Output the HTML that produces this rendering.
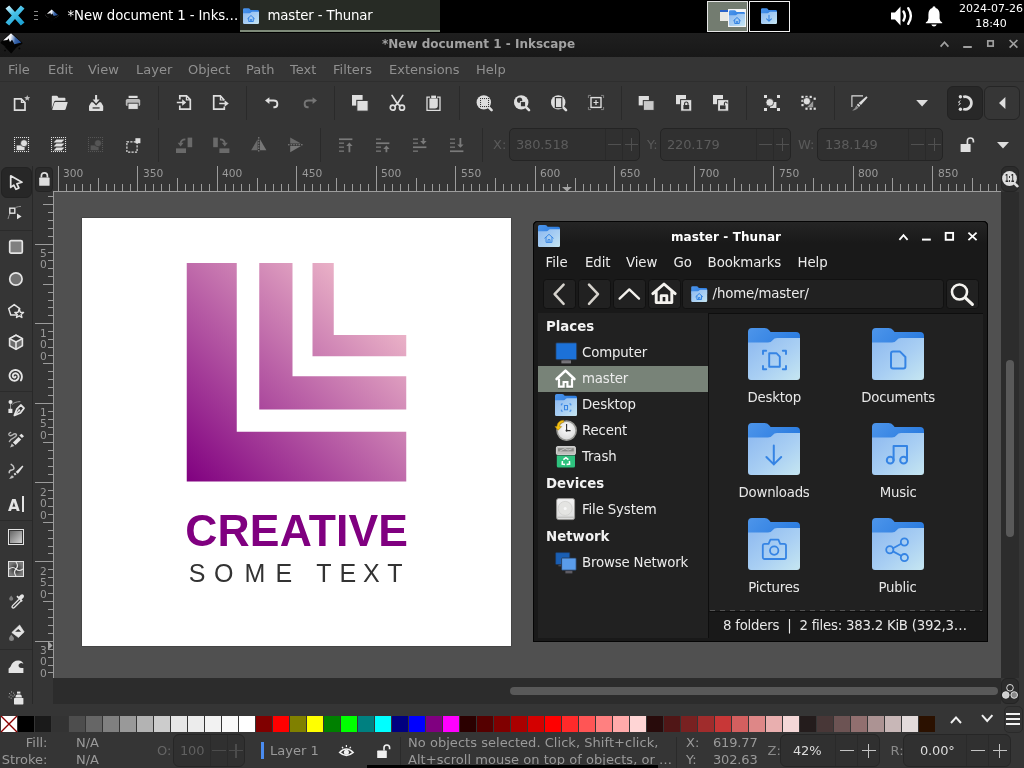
<!DOCTYPE html>
<html><head><meta charset="utf-8"><title>Inkscape</title>
<style>
html,body{margin:0;padding:0;}
body{width:1024px;height:768px;overflow:hidden;position:relative;will-change:transform;background:#353535;font-family:"DejaVu Sans","Liberation Sans",sans-serif;font-size:13px;color:#9b9b9b;}
.a{position:absolute;}
.t{position:absolute;white-space:nowrap;line-height:16px;}
svg{position:absolute;overflow:visible;}
#panel{left:0;top:0;width:1024px;height:33px;background:#000;}
#ititle{left:0;top:33px;width:1024px;height:24px;background:linear-gradient(#1f1f1f,#181818);}
#imenu{left:0;top:57px;width:1024px;height:24px;background:#353535;border-bottom:1px solid #2e2e2e;}
#imenu .t{top:5px;font-size:13px;color:#909090;}
#tb1{left:0;top:82px;width:1024px;height:42px;background:#353535;}
#tb2{left:0;top:124px;width:1024px;height:42px;background:#353535;}
.sep{position:absolute;width:1px;background:#2a2a2a;}
#canvas{left:54px;top:192px;width:947px;height:484px;background:#505050;}
#page{left:82px;top:218px;width:429px;height:428px;background:#fff;}

.rl{position:absolute;font-size:10.67px;line-height:12px;color:#9a9a9a;white-space:nowrap;}

#th{left:533px;top:221px;width:455px;height:421px;background:#191919;border-radius:5px 5px 0 0;box-shadow:inset 0 0 0 1px #050505;}
.tt{position:absolute;white-space:nowrap;line-height:16px;color:#ececec;}
</style></head><body>
<svg width="0" height="0" style="left:0;top:0"><defs>
 <linearGradient id="ffront" x1="0" y1="0" x2="1" y2="1"><stop offset="0" stop-color="#8cc0f2"/><stop offset="1" stop-color="#c4e0f3"/></linearGradient>
 <linearGradient id="inkg" gradientUnits="userSpaceOnUse" x1="4" y1="0" x2="21" y2="4"><stop offset="0" stop-color="#ffffff"/><stop offset="0.42" stop-color="#f2f4f8"/><stop offset="0.72" stop-color="#3c68ac"/><stop offset="1" stop-color="#24509a"/></linearGradient>
 <g id="inklogo">
  <path d="M11 -0.4 L22.2 9.4 Q23 10.4 22 11 L13 16 Q11 17 9 16 L1 10.6 Q0 10 0.8 9 Z" fill="#030303"/>
  <path d="M11 0.2 L21.4 9.4 L14.4 11.2 L12.1 6.8 L10 9 L8.5 5.2 L7.4 7 L3.1 7.4 Z" fill="url(#inkg)"/>
  <path d="M4.4 13.6 L17.6 13 L11.2 20.6 Z" fill="#030303"/>
  <circle cx="19.4" cy="15.4" r="0.9" fill="#030303"/><circle cx="5" cy="17.6" r="0.8" fill="#030303"/>
 </g>
</defs></svg>

<div class="a" id="panel">
 <!-- xfce logo -->
 <svg style="left:5px;top:5px" width="20" height="21" viewBox="0 0 20 21">
  <defs><linearGradient id="xg" x1="0" y1="0" x2="0.6" y2="1"><stop offset="0" stop-color="#e8f8ff"/><stop offset="0.45" stop-color="#4cc4ea"/><stop offset="1" stop-color="#1ea3d4"/></linearGradient></defs>
  <path d="M0.5 3.5 L4.2 0.5 L10 7 L15.8 0.5 L19.5 3.5 L13.2 10.5 L19.5 17.5 L15.8 20.5 L10 14 L4.2 20.5 L0.5 17.5 L6.8 10.5 Z" fill="url(#xg)"/>
 </svg>
 <div class="a" style="left:34px;top:11px;width:4px;height:1px;background:#8a8a8a"></div>
 <div class="a" style="left:34px;top:15px;width:4px;height:1px;background:#8a8a8a"></div>
 <div class="a" style="left:34px;top:19px;width:4px;height:1px;background:#8a8a8a"></div>
 <!-- small inkscape icon -->
 <svg style="left:44.6px;top:8.6px" width="14" height="13.4" viewBox="0 -0.5 23 22">
  <path d="M1.6 8.6 L0.8 10.2 L9 15.6 Q11 16.6 13 15.6 L22 10.6 L21.4 9.4" fill="none" stroke="#6a6a6a" stroke-width="1.3"/><use href="#inklogo"/>
 </svg>
 <div class="t" style="left:67.5px;top:8px;color:#fff;font-size:13.33px;letter-spacing:-0.12px">*New document 1 - Inks…</div>
 <div class="a" style="left:240px;top:0;width:200px;height:30px;background:#272b25;border-bottom:2px solid #7f8b7a"></div>
 <svg style="left:243px;top:8px" width="16" height="16" viewBox="0 0 16 16"><use href="#folds-home"/></svg>
 <div class="t" style="left:267.5px;top:8px;color:#fff;font-size:13.33px;letter-spacing:-0.15px">master - Thunar</div>
 <!-- workspace switcher -->
 <div class="a" style="left:707px;top:1px;width:39px;height:29px;border:1px solid #e6e6e6;background:#737c70"></div>
 <div class="a" style="left:720px;top:10px;width:9px;height:11px;background:#e9e9e4;border-top:2px solid #2a63c9;box-sizing:border-box"></div>
 <div class="a" style="left:728px;top:9px;width:18px;height:18px;background:#f4f4f4"></div>
 <svg style="left:729px;top:10px" width="16" height="16" viewBox="0 0 16 16"><use href="#folds-home"/></svg>
 <div class="a" style="left:749px;top:1px;width:39px;height:29px;border:1px solid #f0f0f0;background:#000"></div>
 <svg style="left:761px;top:8px" width="16" height="16" viewBox="0 0 16 16"><use href="#folds-down"/></svg>
 <!-- volume -->
 <svg style="left:890px;top:5px" width="25" height="22" viewBox="0 0 25 22">
  <path d="M1 7.5 L5 7.5 L10.5 1.5 L10.5 20.5 L5 14.5 L1 14.5 Z" fill="#fff"/>
  <path d="M13.5 6.5 Q16.3 11 13.5 15.5" fill="none" stroke="#fff" stroke-width="2.4" stroke-linecap="round"/>
  <path d="M18.2 3.2 Q23.5 11 18.2 18.8" fill="none" stroke="#fff" stroke-width="2.4" stroke-linecap="round"/>
 </svg>
 <!-- bell -->
 <svg style="left:925px;top:5px" width="18" height="22" viewBox="0 0 18 22">
  <path d="M9 1.2 Q10.6 1.2 10.6 3 Q14.6 4.2 14.6 9.5 L14.6 13.5 Q14.6 15.8 17.2 17.6 L17.2 18.2 L0.8 18.2 L0.8 17.6 Q3.4 15.8 3.4 13.5 L3.4 9.5 Q3.4 4.2 7.4 3 Q7.4 1.2 9 1.2 Z" fill="#fff"/>
  <path d="M6.3 19.6 L11.7 19.6 Q11 21.6 9 21.6 Q7 21.6 6.3 19.6 Z" fill="#fff"/>
 </svg>
 <div class="t" style="left:951px;top:2px;width:80px;text-align:center;color:#fff;font-size:11px;line-height:13px">2024-07-26</div>
 <div class="t" style="left:951px;top:17px;width:80px;text-align:center;color:#fff;font-size:11px;line-height:13px">18:40</div>
</div>

<div class="a" id="ititle">
 <svg style="left:0px;top:0px" width="24" height="24" viewBox="0 0 24 24"><use href="#inklogo"/></svg>
 <div class="t" style="left:0;width:957px;text-align:center;top:3px;font-size:12px;font-weight:bold;color:#a2a2a2">*New document 1 - Inkscape</div>
 <svg style="left:936px;top:0" width="88" height="24" viewBox="0 0 88 24" fill="none" stroke="#a0a0a0" stroke-width="1.7">
  <path d="M4.6 13.6 L8.5 9.2 L12.4 13.6"/>
  <path d="M27.2 14 L35.8 14" stroke-width="2"/>
  <rect x="51.8" y="7.9" width="5.4" height="5.2" stroke-width="1.7"/>
  <path d="M73.6 7 L81.4 14.6 M81.4 7 L73.6 14.6"/>
 </svg>
</div>
<div class="a" id="imenu"><div class="t" style="left:8px">File</div><div class="t" style="left:48px">Edit</div><div class="t" style="left:88px">View</div><div class="t" style="left:136px">Layer</div><div class="t" style="left:188px">Object</div><div class="t" style="left:246px">Path</div><div class="t" style="left:290px">Text</div><div class="t" style="left:333px">Filters</div><div class="t" style="left:389px">Extensions</div><div class="t" style="left:476px">Help</div></div>
<div class="a" style="left:0;top:82px;width:1024px;height:86px;background:#353535"></div>
<div class="sep" style="left:158px;top:86px;height:34px"></div>
<div class="sep" style="left:246px;top:86px;height:34px"></div>
<div class="sep" style="left:334px;top:86px;height:34px"></div>
<div class="sep" style="left:459px;top:86px;height:34px"></div>
<div class="sep" style="left:621px;top:86px;height:34px"></div>
<div class="sep" style="left:746px;top:86px;height:34px"></div>
<div class="sep" style="left:834px;top:86px;height:34px"></div>
<div class="sep" style="left:158px;top:128px;height:34px"></div>
<div class="sep" style="left:320px;top:128px;height:34px"></div>
<div class="sep" style="left:482px;top:128px;height:34px"></div>
<svg style="left:13px;top:95px" width="16" height="16" viewBox="0 0 16 16" ><path d="M1.6 3.9 H8.2 L12 7.6 V15.2 H1.6 Z" fill="none" stroke="#dedede" stroke-width="1.7" stroke-linejoin="miter"/><path d="M8.4 3.9 V7.4 H12" fill="none" stroke="#dedede" stroke-width="1.2"/><polygon points="14.20,0.00 15.02,2.07 17.24,2.21 15.53,3.63 16.08,5.79 14.20,4.60 12.32,5.79 12.87,3.63 11.16,2.21 13.38,2.07" fill="#bdbdbd"/></svg>
<svg style="left:51px;top:95px" width="16" height="16" viewBox="0 0 16 16" ><path d="M0.8 1.6 Q0.8 0.8 1.6 0.8 H5.6 Q6.4 0.8 6.8 1.6 L7.4 2.8 H13.6 Q14.4 2.8 14.4 3.6 V5.8 H4.4 Q3.4 5.8 3.1 6.8 L0.8 13.6 Z" fill="#dedede"/><path d="M4.6 7 H16.2 Q16.9 7 16.6 7.8 L14.6 14.2 Q14.3 15 13.4 15 H1.6 Q1 15 1.3 14.2 L3.4 7.8 Q3.7 7 4.6 7 Z" fill="#dedede"/></svg>
<svg style="left:88px;top:95px" width="16" height="16" viewBox="0 0 16 16" ><path d="M7.1 0 H9.1 V4.6 H11.6 L8.1 8.6 L4.6 4.6 H7.1 Z" fill="#dedede"/><path d="M3.2 7.2 H5 L8.1 10.6 L11.2 7.2 H13 L15.2 11 V15.2 Q15.2 16 14.4 16 H1.8 Q1 16 1 15.2 V11 Z" fill="#dedede"/><rect x="4.6" y="12.3" width="7" height="1.3" fill="#353535"/></svg>
<svg style="left:125px;top:95px" width="16" height="16" viewBox="0 0 16 16" ><rect x="3.6" y="0.8" width="9" height="2.2" fill="#dedede"/><rect x="0.8" y="4" width="14.4" height="7" rx="1.6" fill="#b8b8b8"/><rect x="3" y="8.2" width="10.2" height="6.2" fill="#dedede" stroke="#353535" stroke-width="0.9"/></svg>
<svg style="left:176px;top:95px" width="16" height="16" viewBox="0 0 16 16" ><path d="M3.8 4.6 V0.9 H10.6 L14.3 4.6 V14.1 H3.8 V10.4" fill="none" stroke="#dedede" stroke-width="1.7"/><path d="M10.4 1 V4.8 H14.2" fill="none" stroke="#dedede" stroke-width="1.2"/><path d="M0.8 6.7 H6.2 V4.3 L10.2 7.5 L6.2 10.7 V8.3 H0.8 Z" fill="#dedede"/></svg>
<svg style="left:212px;top:95px" width="16" height="16" viewBox="0 0 16 16" ><path d="M12.3 5.2 L8.4 0.9 H1.7 V14.1 H12.3 V11.6" fill="none" stroke="#dedede" stroke-width="1.7"/><path d="M8.4 1 V5 H12.2" fill="none" stroke="#dedede" stroke-width="1.2"/><path d="M7.2 7.7 H12.6 V5.3 L16.8 8.5 L12.6 11.7 V9.3 H7.2 Z" fill="#dedede"/></svg>
<svg style="left:264px;top:95px" width="16" height="16" viewBox="0 0 16 16" ><path d="M5.4 2.2 V4.6 H9.6 Q14.3 4.6 14.3 8.9 Q14.3 13.2 10.4 13.2 H9.4 V11.3 H10.2 Q12.4 11.3 12.4 8.9 Q12.4 6.6 9.6 6.6 H5.4 V9 L1 5.6 Z" fill="#dedede"/></svg>
<svg style="left:302px;top:95px" width="16" height="16" viewBox="0 0 16 16" ><g transform="translate(16,0) scale(-1,1)"><path d="M5.4 2.2 V4.6 H9.6 Q14.3 4.6 14.3 8.9 Q14.3 13.2 10.4 13.2 H9.4 V11.3 H10.2 Q12.4 11.3 12.4 8.9 Q12.4 6.6 9.6 6.6 H5.4 V9 L1 5.6 Z" fill="#757575"/></g></svg>
<svg style="left:352px;top:95px" width="16" height="16" viewBox="0 0 16 16" ><rect x="0" y="0" width="10.6" height="10.6" fill="#dedede"/><rect x="4.8" y="5.4" width="11.4" height="10.8" fill="#dedede" stroke="#353535" stroke-width="1.1"/></svg>
<svg style="left:388.6px;top:95px" width="16" height="16" viewBox="0 0 16 16" ><path d="M3 0.4 L8.4 8.8 L10.8 10.6 M13.8 0.4 L8.4 8.8 L6 10.6" stroke="#dedede" stroke-width="1.7" fill="none" stroke-linecap="round" stroke-linejoin="round"/><circle cx="3.8" cy="12.7" r="2.5" fill="none" stroke="#dedede" stroke-width="1.7"/><circle cx="13" cy="12.7" r="2.5" fill="none" stroke="#dedede" stroke-width="1.7"/></svg>
<svg style="left:425.6px;top:95px" width="16" height="16" viewBox="0 0 16 16" ><path d="M4 2.1 H1 V15.4 H14 V2.1 H11" fill="none" stroke="#dedede" stroke-width="1.3"/><rect x="5.2" y="0.6" width="4.8" height="2.6" fill="#dedede"/><path d="M3.4 3.4 H11.8 V10.4 Q11.8 13.4 8.8 13.4 H3.4 Z" fill="#dedede"/></svg>
<svg style="left:476px;top:95px" width="16" height="16" viewBox="0 0 16 16" ><g transform="translate(0.6,0)"><circle cx="7.2" cy="7.4" r="7.2" fill="#dedede"/><path d="M12 12.2 L15 15.2" stroke="#dedede" stroke-width="2.6" stroke-linecap="round"/></g><rect x="4" y="3" width="1.05" height="1.05" fill="#353535"/><rect x="4" y="11" width="1.05" height="1.05" fill="#353535"/><rect x="6" y="3" width="1.05" height="1.05" fill="#353535"/><rect x="6" y="11" width="1.05" height="1.05" fill="#353535"/><rect x="4" y="5" width="1.05" height="1.05" fill="#353535"/><rect x="12" y="5" width="1.05" height="1.05" fill="#353535"/><rect x="8" y="3" width="1.05" height="1.05" fill="#353535"/><rect x="8" y="11" width="1.05" height="1.05" fill="#353535"/><rect x="4" y="7" width="1.05" height="1.05" fill="#353535"/><rect x="12" y="7" width="1.05" height="1.05" fill="#353535"/><rect x="10" y="3" width="1.05" height="1.05" fill="#353535"/><rect x="10" y="11" width="1.05" height="1.05" fill="#353535"/><rect x="4" y="9" width="1.05" height="1.05" fill="#353535"/><rect x="12" y="9" width="1.05" height="1.05" fill="#353535"/><rect x="12" y="3" width="1.05" height="1.05" fill="#353535"/><rect x="12" y="11" width="1.05" height="1.05" fill="#353535"/></svg>
<svg style="left:513.8px;top:95px" width="16" height="16" viewBox="0 0 16 16" ><circle cx="7.2" cy="7.4" r="7.2" fill="#dedede"/><path d="M12 12.2 L15 15.2" stroke="#dedede" stroke-width="2.6" stroke-linecap="round"/><circle cx="5.6" cy="5.2" r="2.6" fill="#353535"/><rect x="6.4" y="6.6" width="5.2" height="5.2" fill="#353535" stroke="#dedede" stroke-width="0.9"/></svg>
<svg style="left:551px;top:95px" width="16" height="16" viewBox="0 0 16 16" ><circle cx="7.2" cy="7.4" r="7.2" fill="#dedede"/><path d="M12 12.2 L15 15.2" stroke="#dedede" stroke-width="2.6" stroke-linecap="round"/><rect x="4.4" y="2.6" width="6.4" height="10" fill="#dedede" stroke="#353535" stroke-width="1.2"/></svg>
<svg style="left:588.4px;top:95px" width="16" height="16" viewBox="0 0 16 16" ><rect x="3" y="2.6" width="10" height="9.8" fill="none" stroke="#dedede" stroke-width="1.4"/><path d="M8 5 V10 M5.5 7.5 H10.5" stroke="#dedede" stroke-width="1.2"/><path d="M0.4 3 V0.4 H3 M13 0.4 H15.6 V3 M15.6 12 V14.6 H13 M3 14.6 H0.4 V12" fill="none" stroke="#8a8a8a" stroke-width="0.9"/></svg>
<svg style="left:638.4px;top:95px" width="16" height="16" viewBox="0 0 16 16" ><rect x="0.7" y="1" width="10.2" height="9.4" fill="#dedede"/><rect x="5.3" y="5.6" width="10.8" height="9.8" fill="#c9c9c9" stroke="#353535" stroke-width="1"/></svg>
<svg style="left:675.8px;top:95px" width="16" height="16" viewBox="0 0 16 16" ><rect x="0" y="0" width="10" height="9.2" fill="#dedede"/><rect x="4.6" y="4.6" width="11.2" height="11.6" fill="#dedede" stroke="#353535" stroke-width="1"/><rect x="7.4" y="10" width="5.8" height="4.2" fill="#353535"/><path d="M8.6 10 V8.6 Q8.6 7 10.3 7 Q12 7 12 8.6 V10" fill="none" stroke="#353535" stroke-width="1.1"/></svg>
<svg style="left:713px;top:95px" width="16" height="16" viewBox="0 0 16 16" ><rect x="0" y="0" width="10" height="9.2" fill="#dedede"/><rect x="4.6" y="4.6" width="11.2" height="11.6" fill="#dedede" stroke="#353535" stroke-width="1"/><rect x="7" y="10.4" width="5.6" height="3.8" fill="#353535"/><path d="M11.4 10.4 V8.4 Q11.4 7 12.8 7 Q14.2 7 14.2 8.6" fill="none" stroke="#353535" stroke-width="1.1"/></svg>
<svg style="left:764px;top:95px" width="16" height="16" viewBox="0 0 16 16" ><rect x="0" y="0" width="3" height="3" fill="#dedede"/><rect x="13" y="0" width="3" height="3" fill="#dedede"/><rect x="0" y="13" width="3" height="3" fill="#dedede"/><rect x="13" y="13" width="3" height="3" fill="#dedede"/><rect x="6" y="7" width="6.4" height="6" fill="#dedede"/><circle cx="5.8" cy="7.4" r="3.9" fill="#dedede" stroke="#353535" stroke-width="0.8"/></svg>
<svg style="left:801px;top:95px" width="16" height="16" viewBox="0 0 16 16" ><rect x="0.4" y="0.8" width="2.2" height="2.2" fill="#dedede"/><rect x="4.4" y="0.8" width="2.2" height="2.2" fill="#dedede"/><rect x="8.6" y="0.8" width="2.2" height="2.2" fill="#dedede"/><rect x="0.4" y="4.8" width="2.2" height="2.2" fill="#dedede"/><rect x="0.4" y="9" width="2.2" height="2.2" fill="#dedede"/><rect x="12.6" y="2.6" width="2.2" height="2.2" fill="#dedede"/><rect x="12.6" y="12.6" width="2.2" height="2.2" fill="#dedede"/><rect x="4.4" y="12.6" width="2.2" height="2.2" fill="#dedede"/><rect x="8.6" y="12.6" width="2.2" height="2.2" fill="#dedede"/><path d="M12.2 6 V12.2 H6 Z" fill="#9a9a9a"/><circle cx="5.8" cy="6.2" r="3.7" fill="#dedede" stroke="#353535" stroke-width="0.8"/></svg>
<svg style="left:851px;top:95px" width="16" height="16" viewBox="0 0 16 16" ><path d="M0.9 12 V0.9 H12" fill="none" stroke="#dedede" stroke-width="1.1"/><path d="M15.4 1.2 L16.6 2.6 L9.9 10 L7.7 8 Z" fill="#dedede"/><path d="M7 8.6 L9.2 10.6 L8 11.9 L5.8 9.9 Z" fill="#dedede"/><path d="M5.2 10.4 L7.5 12.4 Q6 14.8 1.2 15.8 Q4.4 13.6 5.2 10.4 Z" fill="#8f8f8f"/></svg>
<svg style="left:14px;top:137px" width="16" height="16" viewBox="0 0 16 16" ><rect x="0" y="0" width="1.05" height="1.05" fill="#dedede"/><rect x="0" y="14" width="1.05" height="1.05" fill="#dedede"/><rect x="2" y="0" width="1.05" height="1.05" fill="#dedede"/><rect x="2" y="14" width="1.05" height="1.05" fill="#dedede"/><rect x="0" y="2" width="1.05" height="1.05" fill="#dedede"/><rect x="14" y="2" width="1.05" height="1.05" fill="#dedede"/><rect x="4" y="0" width="1.05" height="1.05" fill="#dedede"/><rect x="4" y="14" width="1.05" height="1.05" fill="#dedede"/><rect x="0" y="4" width="1.05" height="1.05" fill="#dedede"/><rect x="14" y="4" width="1.05" height="1.05" fill="#dedede"/><rect x="6" y="0" width="1.05" height="1.05" fill="#dedede"/><rect x="6" y="14" width="1.05" height="1.05" fill="#dedede"/><rect x="0" y="6" width="1.05" height="1.05" fill="#dedede"/><rect x="14" y="6" width="1.05" height="1.05" fill="#dedede"/><rect x="8" y="0" width="1.05" height="1.05" fill="#dedede"/><rect x="8" y="14" width="1.05" height="1.05" fill="#dedede"/><rect x="0" y="8" width="1.05" height="1.05" fill="#dedede"/><rect x="14" y="8" width="1.05" height="1.05" fill="#dedede"/><rect x="10" y="0" width="1.05" height="1.05" fill="#dedede"/><rect x="10" y="14" width="1.05" height="1.05" fill="#dedede"/><rect x="0" y="10" width="1.05" height="1.05" fill="#dedede"/><rect x="14" y="10" width="1.05" height="1.05" fill="#dedede"/><rect x="12" y="0" width="1.05" height="1.05" fill="#dedede"/><rect x="12" y="14" width="1.05" height="1.05" fill="#dedede"/><rect x="0" y="12" width="1.05" height="1.05" fill="#dedede"/><rect x="14" y="12" width="1.05" height="1.05" fill="#dedede"/><rect x="14" y="0" width="1.05" height="1.05" fill="#dedede"/><rect x="14" y="14" width="1.05" height="1.05" fill="#dedede"/><rect x="2.6" y="8.4" width="8" height="4.8" fill="#dedede"/><circle cx="10" cy="6.2" r="3.5" fill="#dedede" stroke="#353535" stroke-width="0.7"/></svg>
<svg style="left:51px;top:137px" width="16" height="16" viewBox="0 0 16 16" ><rect x="0" y="0" width="1.05" height="1.05" fill="#dedede"/><rect x="0" y="14" width="1.05" height="1.05" fill="#dedede"/><rect x="2" y="0" width="1.05" height="1.05" fill="#dedede"/><rect x="2" y="14" width="1.05" height="1.05" fill="#dedede"/><rect x="0" y="2" width="1.05" height="1.05" fill="#dedede"/><rect x="14" y="2" width="1.05" height="1.05" fill="#dedede"/><rect x="4" y="0" width="1.05" height="1.05" fill="#dedede"/><rect x="4" y="14" width="1.05" height="1.05" fill="#dedede"/><rect x="0" y="4" width="1.05" height="1.05" fill="#dedede"/><rect x="14" y="4" width="1.05" height="1.05" fill="#dedede"/><rect x="6" y="0" width="1.05" height="1.05" fill="#dedede"/><rect x="6" y="14" width="1.05" height="1.05" fill="#dedede"/><rect x="0" y="6" width="1.05" height="1.05" fill="#dedede"/><rect x="14" y="6" width="1.05" height="1.05" fill="#dedede"/><rect x="8" y="0" width="1.05" height="1.05" fill="#dedede"/><rect x="8" y="14" width="1.05" height="1.05" fill="#dedede"/><rect x="0" y="8" width="1.05" height="1.05" fill="#dedede"/><rect x="14" y="8" width="1.05" height="1.05" fill="#dedede"/><rect x="10" y="0" width="1.05" height="1.05" fill="#dedede"/><rect x="10" y="14" width="1.05" height="1.05" fill="#dedede"/><rect x="0" y="10" width="1.05" height="1.05" fill="#dedede"/><rect x="14" y="10" width="1.05" height="1.05" fill="#dedede"/><rect x="12" y="0" width="1.05" height="1.05" fill="#dedede"/><rect x="12" y="14" width="1.05" height="1.05" fill="#dedede"/><rect x="0" y="12" width="1.05" height="1.05" fill="#dedede"/><rect x="14" y="12" width="1.05" height="1.05" fill="#dedede"/><rect x="14" y="0" width="1.05" height="1.05" fill="#dedede"/><rect x="14" y="14" width="1.05" height="1.05" fill="#dedede"/><path d="M5.4 2.6 H13.4 L10.6 5.4 H2.6 Z" fill="#dedede"/><path d="M5.4 6.6 H13.4 L10.6 9.399999999999999 H2.6 Z" fill="#dedede"/><path d="M5.4 10.6 H13.4 L10.6 13.399999999999999 H2.6 Z" fill="#dedede"/></svg>
<svg style="left:88px;top:137px" width="16" height="16" viewBox="0 0 16 16" ><rect x="0" y="0" width="1.05" height="1.05" fill="#555"/><rect x="0" y="14" width="1.05" height="1.05" fill="#555"/><rect x="2" y="0" width="1.05" height="1.05" fill="#555"/><rect x="2" y="14" width="1.05" height="1.05" fill="#555"/><rect x="0" y="2" width="1.05" height="1.05" fill="#555"/><rect x="14" y="2" width="1.05" height="1.05" fill="#555"/><rect x="4" y="0" width="1.05" height="1.05" fill="#555"/><rect x="4" y="14" width="1.05" height="1.05" fill="#555"/><rect x="0" y="4" width="1.05" height="1.05" fill="#555"/><rect x="14" y="4" width="1.05" height="1.05" fill="#555"/><rect x="6" y="0" width="1.05" height="1.05" fill="#555"/><rect x="6" y="14" width="1.05" height="1.05" fill="#555"/><rect x="0" y="6" width="1.05" height="1.05" fill="#555"/><rect x="14" y="6" width="1.05" height="1.05" fill="#555"/><rect x="8" y="0" width="1.05" height="1.05" fill="#555"/><rect x="8" y="14" width="1.05" height="1.05" fill="#555"/><rect x="0" y="8" width="1.05" height="1.05" fill="#555"/><rect x="14" y="8" width="1.05" height="1.05" fill="#555"/><rect x="10" y="0" width="1.05" height="1.05" fill="#555"/><rect x="10" y="14" width="1.05" height="1.05" fill="#555"/><rect x="0" y="10" width="1.05" height="1.05" fill="#555"/><rect x="14" y="10" width="1.05" height="1.05" fill="#555"/><rect x="12" y="0" width="1.05" height="1.05" fill="#555"/><rect x="12" y="14" width="1.05" height="1.05" fill="#555"/><rect x="0" y="12" width="1.05" height="1.05" fill="#555"/><rect x="14" y="12" width="1.05" height="1.05" fill="#555"/><rect x="14" y="0" width="1.05" height="1.05" fill="#555"/><rect x="14" y="14" width="1.05" height="1.05" fill="#555"/><rect x="2.6" y="8.4" width="8" height="4.8" fill="#555"/><circle cx="10" cy="6.2" r="3.5" fill="#555" stroke="#353535" stroke-width="0.7"/></svg>
<svg style="left:125.6px;top:137px" width="16" height="16" viewBox="0 0 16 16" ><rect x="0.9" y="4.9" width="10.2" height="10.2" fill="none" stroke="#dedede" stroke-width="1.2" stroke-dasharray="2.2 1.2"/><rect x="9.4" y="1.2" width="5" height="5" fill="#dedede"/></svg>
<svg style="left:175.8px;top:137px" width="16" height="16" viewBox="0 0 16 16" ><rect x="11.6" y="0.6" width="4.6" height="9.6" fill="#6a6a6a"/><rect x="0" y="11.4" width="10" height="4.6" fill="#6a6a6a"/><path d="M9.4 2.4 Q4.6 2.4 4.6 7" fill="none" stroke="#6a6a6a" stroke-width="1.8"/><path d="M1.6 5.8 H7.6 L4.6 9.6 Z" fill="#6a6a6a"/></svg>
<svg style="left:212.8px;top:137px" width="16" height="16" viewBox="0 0 16 16" ><g transform="translate(16.4,0) scale(-1,1)"><rect x="11.6" y="0.6" width="4.6" height="9.6" fill="#6a6a6a"/><rect x="0" y="11.4" width="10" height="4.6" fill="#6a6a6a"/><path d="M9.4 2.4 Q4.6 2.4 4.6 7" fill="none" stroke="#6a6a6a" stroke-width="1.8"/><path d="M1.6 5.8 H7.6 L4.6 9.6 Z" fill="#6a6a6a"/></g></svg>
<svg style="left:251px;top:137px" width="16" height="16" viewBox="0 0 16 16" ><path d="M6.6 2.2 V13.2 H0.2 Z" fill="#6a6a6a"/><path d="M9 2.2 V13.2 H15.4 Z" fill="#777"/><path d="M7.8 0 V15.4" stroke="#8a8a8a" stroke-width="1" stroke-dasharray="1.6 1"/></svg>
<svg style="left:287.6px;top:137px" width="16" height="16" viewBox="0 0 16 16" ><path d="M2.2 0.4 V6.6 H13 Z" fill="#6a6a6a"/><path d="M2.2 15.2 V9 H13 Z" fill="#777"/><path d="M0 7.8 H15" stroke="#8a8a8a" stroke-width="1" stroke-dasharray="1.6 1"/></svg>
<svg style="left:338.8px;top:138px" width="16" height="16" viewBox="0 0 16 16" ><rect x="0" y="0.4" width="13.4" height="1.7" fill="#7a7a7a"/><rect x="0" y="4.4" width="5" height="1.6" fill="#6a6a6a"/><rect x="0" y="8.4" width="5" height="1.6" fill="#6a6a6a"/><rect x="0" y="12.4" width="5" height="1.6" fill="#6a6a6a"/><path d="M9.5 14.2 V8.0 H7.2 L10.4 4.6 L13.600000000000001 8.0 H11.3 V14.2 Z" fill="#7a7a7a"/></svg>
<svg style="left:375.8px;top:138px" width="16" height="16" viewBox="0 0 16 16" ><rect x="0" y="0.4" width="5" height="1.6" fill="#6a6a6a"/><rect x="0" y="4.4" width="13.4" height="1.7" fill="#7a7a7a"/><rect x="0" y="8.4" width="5" height="1.6" fill="#6a6a6a"/><rect x="0" y="12.4" width="5" height="1.6" fill="#6a6a6a"/><path d="M9.5 14.2 V11.0 H7.2 L10.4 7.6 L13.600000000000001 11.0 H11.3 V14.2 Z" fill="#7a7a7a"/></svg>
<svg style="left:413px;top:138px" width="16" height="16" viewBox="0 0 16 16" ><rect x="0" y="0.4" width="5" height="1.6" fill="#6a6a6a"/><rect x="0" y="4.4" width="5" height="1.6" fill="#6a6a6a"/><rect x="0" y="8.4" width="13.4" height="1.7" fill="#7a7a7a"/><rect x="0" y="12.4" width="5" height="1.6" fill="#6a6a6a"/><path d="M9.5 0 V3.0000000000000004 H7.2 L10.4 6.4 L13.600000000000001 3.0000000000000004 H11.3 V0 Z" fill="#7a7a7a"/></svg>
<svg style="left:449.8px;top:138px" width="16" height="16" viewBox="0 0 16 16" ><rect x="0" y="0.4" width="5" height="1.6" fill="#6a6a6a"/><rect x="0" y="4.4" width="5" height="1.6" fill="#6a6a6a"/><rect x="0" y="8.4" width="5" height="1.6" fill="#6a6a6a"/><rect x="0" y="12.4" width="13.4" height="1.7" fill="#7a7a7a"/><path d="M9.5 0 V6.4 H7.2 L10.4 9.8 L13.600000000000001 6.4 H11.3 V0 Z" fill="#7a7a7a"/></svg>
<svg style="left:916px;top:99.6px" width="12" height="7" viewBox="0 0 12 7" ><path d="M0.2 0 H12 L6.1 6.4 Z" fill="#dedede"/></svg>
<div class="a" style="left:947px;top:86px;width:34px;height:32px;border:1px solid #222;border-radius:6px;background:#282828"></div>
<svg style="left:957.4px;top:95px" width="16" height="16" viewBox="0 0 16 16" ><path d="M6.2 2 A6.3 6.3 0 1 1 6.2 14" fill="none" stroke="#dedede" stroke-width="2.7"/><circle cx="3.4" cy="1.8" r="1.7" fill="#dedede"/><circle cx="3.4" cy="14.2" r="1.7" fill="#dedede"/><path d="M3.4 5.6 L1.4 7.2 L3.4 8.6 L1.4 10.2" fill="none" stroke="#dedede" stroke-width="1"/></svg>
<div class="a" style="left:984px;top:86px;width:34px;height:32px;border:1px solid #252525;border-radius:6px;background:#363636"></div>
<svg style="left:999px;top:97.2px" width="7" height="12" viewBox="0 0 7 12" ><path d="M6.4 0 V12 L0 6 Z" fill="#dedede"/></svg>
<div class="t" style="left:493px;top:137px;color:#5a5a5a">X:</div><div class="a" style="left:509px;top:128px;width:129px;height:31px;border:1px solid #242424;border-radius:5px;background:#303030"></div><div class="t" style="left:516px;top:137px;color:#5c5c5c;letter-spacing:-0.15px">380.518</div><div class="a" style="left:605px;top:129px;width:1px;height:31px;background:#2a2a2a"></div><div class="a" style="left:622px;top:129px;width:1px;height:31px;background:#2a2a2a"></div><div class="a" style="left:607.5px;top:144px;width:13px;height:1px;background:#505050"></div><div class="a" style="left:624.5px;top:144px;width:13px;height:1px;background:#505050"></div><div class="a" style="left:630.5px;top:138px;width:1px;height:13px;background:#505050"></div>
<div class="t" style="left:647px;top:137px;color:#5a5a5a">Y:</div><div class="a" style="left:660px;top:128px;width:129px;height:31px;border:1px solid #242424;border-radius:5px;background:#303030"></div><div class="t" style="left:667px;top:137px;color:#5c5c5c;letter-spacing:-0.15px">220.179</div><div class="a" style="left:756px;top:129px;width:1px;height:31px;background:#2a2a2a"></div><div class="a" style="left:773px;top:129px;width:1px;height:31px;background:#2a2a2a"></div><div class="a" style="left:758.5px;top:144px;width:13px;height:1px;background:#505050"></div><div class="a" style="left:775.5px;top:144px;width:13px;height:1px;background:#505050"></div><div class="a" style="left:781.5px;top:138px;width:1px;height:13px;background:#505050"></div>
<div class="t" style="left:798px;top:137px;color:#5a5a5a">W:</div><div class="a" style="left:817px;top:128px;width:124px;height:31px;border:1px solid #242424;border-radius:5px;background:#303030"></div><div class="t" style="left:825px;top:137px;color:#5c5c5c;letter-spacing:-0.15px">138.149</div><div class="a" style="left:908px;top:129px;width:1px;height:31px;background:#2a2a2a"></div><div class="a" style="left:925px;top:129px;width:1px;height:31px;background:#2a2a2a"></div><div class="a" style="left:910.5px;top:144px;width:13px;height:1px;background:#505050"></div><div class="a" style="left:927.5px;top:144px;width:13px;height:1px;background:#505050"></div><div class="a" style="left:933.5px;top:138px;width:1px;height:13px;background:#505050"></div>
<svg style="left:959.6px;top:137px" width="16" height="16" viewBox="0 0 16 16" ><rect x="0.6" y="7" width="10" height="8" rx="0.6" fill="#dedede"/><path d="M7.4 7 V4 Q7.4 1 10.4 1 Q13.4 1 13.4 4 V5.4" fill="none" stroke="#dedede" stroke-width="1.7"/></svg>
<svg style="left:997px;top:141.8px" width="12" height="7" viewBox="0 0 12 7" ><path d="M0 0 H12 L6 6.4 Z" fill="#dedede"/></svg>
<div class="a" style="left:33px;top:166px;width:991px;height:26px;background:#353535"></div>
<div class="a" style="left:33px;top:192px;width:21px;height:512px;background:#353535"></div>
<div class="a" style="left:54px;top:192px;width:947px;height:486px;background:#505050"></div>
<div class="a" style="left:82px;top:218px;width:429px;height:428px;background:#fff;box-shadow:0 0 0 0.5px #3a3a3a"></div>
<svg style="left:0;top:0" width="1024" height="700"><defs><linearGradient id="lg" gradientUnits="userSpaceOnUse" x1="187" y1="481.5" x2="406.25" y2="263"><stop offset="0" stop-color="#800080"/><stop offset="1" stop-color="#ffd5d5"/></linearGradient></defs><path d="M186.75 263 H236.75 V431.75 H406.25 V481.4 H186.75 Z M259.25 263 H292.5 V376.25 H406.25 V409.5 H259.25 Z M312.5 263 H333.75 V335 H406.25 V356.25 H312.5 Z" fill="url(#lg)"/><text x="185.3" y="545.9" font-family="Liberation Sans, sans-serif" font-weight="bold" font-size="44.5" letter-spacing="0.15" fill="#800080">CREATIVE</text><text x="197.1 223.75 255 283.75 304 324 347.9 371.25 395" y="581.8" text-anchor="middle" font-family="Liberation Sans, sans-serif" font-size="25" fill="#333333">SOME TEXT</text></svg>
<div class="a" style="left:53px;top:191px;width:948px;height:1px;background:#9c9c9c"></div>
<div class="a" style="left:53px;top:191px;width:1px;height:487px;background:#9c9c9c"></div>
<svg style="left:0;top:0" width="1024" height="200"><path d="M58.5 166V191M66.5 184V191M74.5 184V191M82.5 184V191M90.5 184V191M98.5 178V191M106.5 184V191M114.5 184V191M122.5 184V191M130.5 184V191M137.5 166V191M145.5 184V191M153.5 184V191M161.5 184V191M169.5 184V191M177.5 178V191M185.5 184V191M193.5 184V191M201.5 184V191M209.5 184V191M217.5 166V191M225.5 184V191M233.5 184V191M241.5 184V191M249.5 184V191M257.5 178V191M265.5 184V191M273.5 184V191M281.5 184V191M288.5 184V191M296.5 166V191M304.5 184V191M312.5 184V191M320.5 184V191M328.5 184V191M336.5 178V191M344.5 184V191M352.5 184V191M360.5 184V191M368.5 184V191M376.5 166V191M384.5 184V191M392.5 184V191M400.5 184V191M408.5 184V191M416.5 178V191M424.5 184V191M432.5 184V191M439.5 184V191M447.5 184V191M455.5 166V191M463.5 184V191M471.5 184V191M479.5 184V191M487.5 184V191M495.5 178V191M503.5 184V191M511.5 184V191M519.5 184V191M527.5 184V191M535.5 166V191M543.5 184V191M551.5 184V191M559.5 184V191M567.5 184V191M575.5 178V191M583.5 184V191M590.5 184V191M598.5 184V191M606.5 184V191M614.5 166V191M622.5 184V191M630.5 184V191M638.5 184V191M646.5 184V191M654.5 178V191M662.5 184V191M670.5 184V191M678.5 184V191M686.5 184V191M694.5 166V191M702.5 184V191M710.5 184V191M718.5 184V191M726.5 184V191M734.5 178V191M741.5 184V191M749.5 184V191M757.5 184V191M765.5 184V191M773.5 166V191M781.5 184V191M789.5 184V191M797.5 184V191M805.5 184V191M813.5 178V191M821.5 184V191M829.5 184V191M837.5 184V191M845.5 184V191M853.5 166V191M861.5 184V191M869.5 184V191M877.5 184V191M885.5 184V191M892.5 178V191M900.5 184V191M908.5 184V191M916.5 184V191M924.5 184V191M932.5 166V191M940.5 184V191M948.5 184V191M956.5 184V191M964.5 184V191M972.5 178V191M980.5 184V191M988.5 184V191M996.5 184V191" stroke="#9c9c9c" stroke-width="1" fill="none"/></svg>
<div class="rl" style="left:63px;top:168px">300</div>
<div class="rl" style="left:143px;top:168px">350</div>
<div class="rl" style="left:222px;top:168px">400</div>
<div class="rl" style="left:302px;top:168px">450</div>
<div class="rl" style="left:381px;top:168px">500</div>
<div class="rl" style="left:461px;top:168px">550</div>
<div class="rl" style="left:540px;top:168px">600</div>
<div class="rl" style="left:620px;top:168px">650</div>
<div class="rl" style="left:699px;top:168px">700</div>
<div class="rl" style="left:779px;top:168px">750</div>
<div class="rl" style="left:858px;top:168px">800</div>
<div class="rl" style="left:938px;top:168px">850</div>
<svg style="left:0;top:0" width="60" height="700"><path d="M48 196.5H53M43 204.5H53M48 212.5H53M48 220.5H53M48 228.5H53M48 236.5H53M35 244.5H53M48 252.5H53M48 260.5H53M48 268.5H53M48 276.5H53M43 284.5H53M48 292.5H53M48 300.5H53M48 307.5H53M48 315.5H53M35 323.5H53M48 331.5H53M48 339.5H53M48 347.5H53M48 355.5H53M43 363.5H53M48 371.5H53M48 379.5H53M48 387.5H53M48 395.5H53M35 403.5H53M48 411.5H53M48 419.5H53M48 427.5H53M48 434.5H53M43 442.5H53M48 450.5H53M48 458.5H53M48 466.5H53M48 474.5H53M35 482.5H53M48 490.5H53M48 498.5H53M48 506.5H53M48 514.5H53M43 522.5H53M48 530.5H53M48 538.5H53M48 546.5H53M48 553.5H53M35 561.5H53M48 569.5H53M48 577.5H53M48 585.5H53M48 593.5H53M43 601.5H53M48 609.5H53M48 617.5H53M48 625.5H53M48 633.5H53M35 641.5H53M48 649.5H53M48 657.5H53M48 665.5H53M48 672.5H53" stroke="#9c9c9c" stroke-width="1" fill="none"/></svg>
<div class="rl" style="left:40px;top:248.0px">5</div>
<div class="rl" style="left:40px;top:259.3px">0</div>
<div class="rl" style="left:40px;top:328.0px">1</div>
<div class="rl" style="left:40px;top:339.3px">0</div>
<div class="rl" style="left:40px;top:350.6px">0</div>
<div class="rl" style="left:40px;top:407.0px">1</div>
<div class="rl" style="left:40px;top:418.3px">5</div>
<div class="rl" style="left:40px;top:429.6px">0</div>
<div class="rl" style="left:40px;top:487.0px">2</div>
<div class="rl" style="left:40px;top:498.3px">0</div>
<div class="rl" style="left:40px;top:509.6px">0</div>
<div class="rl" style="left:40px;top:566.0px">2</div>
<div class="rl" style="left:40px;top:577.3px">5</div>
<div class="rl" style="left:40px;top:588.6px">0</div>
<div class="rl" style="left:40px;top:645.0px">3</div>
<div class="rl" style="left:40px;top:656.3px">0</div>
<div class="rl" style="left:40px;top:667.6px">0</div>
<svg style="left:562px;top:187px" width="10" height="5" viewBox="0 0 10 5" ><path d="M0 0 H10 L5 4.6 Z" fill="#a4a4a4"/></svg>
<svg style="left:48px;top:641px" width="5" height="9" viewBox="0 0 5 9" ><path d="M0 0 V9 L4.6 4.5 Z" fill="#a4a4a4"/></svg>
<div class="a" style="left:35px;top:167px;width:16px;height:23px;border:1px solid #242424;border-radius:4px;background:#2b2b2b"></div>
<svg style="left:38.6px;top:172px" width="11" height="14" viewBox="0 0 11 14" ><rect x="0.2" y="5.6" width="10.4" height="8.2" rx="0.6" fill="#dedede"/><path d="M2.4 5.6 V3.8 Q2.4 0.9 5.4 0.9 Q8.4 0.9 8.4 3.8 V5.6" fill="none" stroke="#dedede" stroke-width="1.7"/></svg>
<div class="a" style="left:0;top:166px;width:32px;height:550px;background:#353535"></div>
<div class="a" style="left:32px;top:166px;width:1px;height:538px;background:#282828"></div>
<div class="a" style="left:0.5px;top:166.5px;width:29.5px;height:29px;border:1px solid #222;border-radius:6px;background:#272727"></div>
<div class="a" style="left:0;top:230px;width:32px;height:1px;background:#2b2b2b"></div>
<div class="a" style="left:0;top:391px;width:32px;height:1px;background:#2b2b2b"></div>
<div class="a" style="left:0;top:520px;width:32px;height:1px;background:#2b2b2b"></div>
<div class="a" style="left:0;top:649px;width:32px;height:1px;background:#2b2b2b"></div>
<svg style="left:8px;top:174px" width="16" height="16" viewBox="0 0 16 16" ><path d="M2.7 1.8 L2.7 13.4 L5.8 11.1 L8 15.3 L10.9 13.9 L8.9 9.8 L14 8.3 Z" fill="#2b2b2b" stroke="#e4e4e4" stroke-width="1.7" stroke-linejoin="round"/></svg>
<svg style="left:7.4px;top:205px" width="16" height="16" viewBox="0 0 16 16" ><rect x="2.8" y="3.2" width="5" height="5" fill="#353535" stroke="#e4e4e4" stroke-width="1.4"/><path d="M8.6 2.4 Q12 1.4 14 1.4 M2.8 9 Q1.4 11.6 1 14" fill="none" stroke="#9a9a9a" stroke-width="0.9"/><path d="M10 8.6 L14.6 11.4 L10 14.2 Z" fill="#e4e4e4"/></svg>
<svg style="left:8px;top:239px" width="16" height="16" viewBox="0 0 16 16" ><rect x="1.7" y="1.7" width="12.6" height="12.4" rx="1.4" fill="#808080" stroke="#e4e4e4" stroke-width="1.7"/></svg>
<svg style="left:8px;top:271px" width="16" height="16" viewBox="0 0 16 16" ><circle cx="7.9" cy="8" r="6.2" fill="#727272" stroke="#e4e4e4" stroke-width="1.7"/></svg>
<svg style="left:8px;top:304px" width="16" height="16" viewBox="0 0 16 16" ><polygon points="6.20,0.60 11.72,4.61 9.61,11.09 2.79,11.09 0.68,4.61" fill="none" stroke="#e4e4e4" stroke-width="1.5" stroke-linejoin="round"/><polygon points="11.20,5.20 12.38,8.18 15.57,8.38 13.10,10.42 13.90,13.52 11.20,11.80 8.50,13.52 9.30,10.42 6.83,8.38 10.02,8.18" fill="#353535" stroke="#e4e4e4" stroke-width="1.4" stroke-linejoin="round"/></svg>
<svg style="left:8px;top:334px" width="16" height="16" viewBox="0 0 16 16" ><path d="M8 1.2 L14.4 4.6 V11.8 L8 15.4 L1.6 11.8 V4.6 Z" fill="#6a6a6a" stroke="#e4e4e4" stroke-width="1.6" stroke-linejoin="round"/><path d="M8 1.2 L14.4 4.6 L8 8 L1.6 4.6 Z" fill="#353535" stroke="#e4e4e4" stroke-width="1.6" stroke-linejoin="round"/><path d="M8 8 V15.4" stroke="#e4e4e4" stroke-width="1.6"/></svg>
<svg style="left:8px;top:368px" width="16" height="16" viewBox="0 0 16 16" ><path d="M12.88 12.39 L13.52 11.01 L13.85 9.55 L13.87 8.08 L13.58 6.66 L13.02 5.35 L12.20 4.20 L11.18 3.27 L10.01 2.58 L8.74 2.17 L7.44 2.02 L6.16 2.16 L4.95 2.55 L3.88 3.17 L2.97 3.99 L2.27 4.96 L1.80 6.04 L1.57 7.16 L1.58 8.29 L1.82 9.37 L2.28 10.36 L2.91 11.20 L3.70 11.88 L4.59 12.37 L5.54 12.66 L6.50 12.73 L7.44 12.61 L8.31 12.29 L9.07 11.82 L9.70 11.21 L10.18 10.49 L10.48 9.72 L10.61 8.92 L10.57 8.14 L10.37 7.40 L10.03 6.74 L9.57 6.19 L9.02 5.76 L8.41 5.47 L7.78 5.32 L7.15 5.31 L6.56 5.43 L6.03 5.67 L5.58 6.00 L5.22 6.40 L4.97 6.85 L4.84 7.32 L4.81 7.79 L4.88 8.24 L5.04 8.63 L5.27 8.96 L5.55 9.22 L5.86 9.39 L6.19 9.49 L6.50 9.50 L6.79 9.45 L7.04 9.33 L7.24 9.17 L7.37 8.99 L7.45 8.79 L7.47 8.60" fill="none" stroke="#e4e4e4" stroke-width="1.9" stroke-linecap="round" stroke-linejoin="round"/></svg>
<svg style="left:7.5px;top:400px" width="16" height="16" viewBox="0 0 16 16" ><circle cx="2.5" cy="2" r="2" fill="#e4e4e4"/><path d="M2.5 4 V9" stroke="#9a9a9a" stroke-width="1"/><rect x="0.4" y="8.8" width="4" height="4.2" fill="#e4e4e4"/><path d="M3.8 4.8 Q6 1.8 12.4 1.6" fill="none" stroke="#9a9a9a" stroke-width="1"/><path d="M12.8 5 L16 8.2 L12.4 13 L6.4 15.4 L8.8 9.2 Z" fill="none" stroke="#e4e4e4" stroke-width="1.8" stroke-linejoin="round"/><path d="M6.4 15.4 L10.6 11" stroke="#e4e4e4" stroke-width="1.2"/><circle cx="11.2" cy="10.4" r="1.1" fill="#e4e4e4"/></svg>
<svg style="left:8px;top:432px" width="16" height="16" viewBox="0 0 16 16" ><path d="M2.7 0.4 Q0.2 1.4 1 3 Q2 4.6 4.6 2.8 Q7.4 0.8 8.4 2.6 Q9 4.2 6 5.6 Q2.4 7.2 1.4 9.6" fill="none" stroke="#b4b4b4" stroke-width="1.4" stroke-linecap="round"/><path d="M11.3 3.5 L13.5 1.8 L16 4.3 L14 6 Z" fill="#e4e4e4"/><path d="M4.9 10.4 L10.5 4.9 L13.2 7.6 L7.6 13 Z" fill="#e4e4e4"/><path d="M3.8 11.6 L6.3 14.1 L2.1 15.5 Z" fill="#c4c4c4"/></svg>
<svg style="left:8px;top:464px" width="16" height="16" viewBox="0 0 16 16" ><path d="M3.2 0.3 Q5.6 1.6 5.9 3.8 Q6.2 5.8 3.8 6 Q1.2 6.2 1.2 8.8" fill="none" stroke="#c4c4c4" stroke-width="1.5" stroke-linecap="round"/><path d="M14.4 1.6 L15.4 2.4 L9.9 9.75 L7.7 7.9 Z" fill="#e4e4e4"/><path d="M5.7 9.75 L7.1 8.8 L8.5 10.2 L6.8 11.5 Z" fill="#e4e4e4"/><path d="M4 11.3 L6.2 13 Q5 14.4 1 14.9 Q2 14 2.6 12.8 Z" fill="#c0c0c0"/></svg>
<div class="t" style="left:8px;top:494.6px;font-weight:bold;font-size:15.2px;line-height:22px;color:#e4e4e4;font-family:'DejaVu Sans',sans-serif">A</div>
<div class="a" style="left:22px;top:496px;width:2px;height:16px;background:#e4e4e4"></div>
<div class="a" style="left:8px;top:529px;width:14px;height:14px;border:1px solid #e4e4e4;background:#353535"></div>
<div class="a" style="left:10px;top:531px;width:12px;height:12px;background:linear-gradient(135deg,#666,#d2d2d2)"></div>
<div class="a" style="left:8px;top:561px;width:14px;height:14px;border:1px solid #e4e4e4;background:radial-gradient(circle at 50% 50%,#555 0,#444 100%)"></div>
<svg style="left:8px;top:561px" width="16" height="16" viewBox="0 0 16 16" ><defs><radialGradient id="mg"><stop offset="0" stop-color="#262626"/><stop offset="1" stop-color="#7a7a7a"/></radialGradient></defs><rect x="1" y="1" width="14" height="14" fill="url(#mg)"/><path d="M8 1 Q11 5 8 8 Q5 11 8 15 M1 8 Q5 5 8 8 Q11 11 15 8" fill="none" stroke="#e4e4e4" stroke-width="1.2"/></svg>
<svg style="left:8px;top:593px" width="16" height="16" viewBox="0 0 16 16" ><path d="M3.2 2.4 Q5.2 4.6 5.2 6 Q5.2 7.8 3.2 7.8 Q1.2 7.8 1.2 6 Q1.2 4.6 3.2 2.4 Z" fill="#7a7a7a"/><path d="M11 6.2 L4.6 12.6 Q3.6 13.8 4.2 14.6 M12.8 8 L6.4 14.4 Q5.2 15.4 4.2 14.6" fill="none" stroke="#e4e4e4" stroke-width="1.3"/><path d="M9.6 5 L13.6 9 L14.8 7.8 L13.6 6.6 L15.6 4.4 Q16.6 3 15.4 1.8 Q14.2 0.8 12.8 1.8 L10.8 3.8 L9.6 2.6 L8.4 3.8 Z" fill="#e4e4e4"/></svg>
<svg style="left:8px;top:624px" width="16" height="16" viewBox="0 0 16 16" ><path d="M3.3 10.4 Q6 13.4 6 14.8 Q6 17 3.5 17 Q1 17 1 14.8 Q1 13.4 3.3 10.4 Z" fill="#868686"/><path d="M11.6 1 L16.2 8 L10.4 13.5 L3.8 8.5 Z" fill="#e4e4e4" stroke="#e4e4e4" stroke-width="0.6" stroke-linejoin="round"/><path d="M10.3 4.9 L13.2 7.8 L7.1 7.8 Z" fill="#353535"/></svg>
<svg style="left:8px;top:660px" width="16" height="16" viewBox="0 0 16 16" ><path d="M0.6 13 V8.6 Q1.6 8 2.6 6.4 Q4.8 0.6 10.4 0.6 Q14.4 0.8 15.4 4 Q13.6 2.6 11.8 3.4 Q10 4.4 10.6 6.2 Q11.6 8.6 15.4 8 V13 Z" fill="#e4e4e4"/></svg>
<svg style="left:8px;top:691px" width="16" height="16" viewBox="0 0 16 16" ><rect x="6" y="7" width="9.4" height="6.4" rx="0.6" fill="#e4e4e4"/><path d="M7.4 6.4 Q7.6 3.6 9.2 3.4 H12.2 Q13.8 3.6 14 6.4 Z" fill="#e4e4e4"/><rect x="9" y="0.6" width="3.4" height="2" fill="#e4e4e4"/><rect x="1" y="2" width="1.1" height="1.1" fill="#9a9a9a"/><rect x="3" y="0.4" width="1.1" height="1.1" fill="#9a9a9a"/><rect x="5" y="1.6" width="1.1" height="1.1" fill="#9a9a9a"/><rect x="2.4" y="3.6" width="1.1" height="1.1" fill="#9a9a9a"/><rect x="0.6" y="5.4" width="1.1" height="1.1" fill="#9a9a9a"/><rect x="4.4" y="4.6" width="1.1" height="1.1" fill="#9a9a9a"/><rect x="2.6" y="6.6" width="1.1" height="1.1" fill="#9a9a9a"/><rect x="6" y="3.4" width="1.1" height="1.1" fill="#9a9a9a"/></svg>
<div class="a" style="left:53px;top:678px;width:948px;height:26px;background:#2c2c2c"></div>
<div class="a" style="left:1001px;top:192px;width:18px;height:486px;background:#2c2c2c"></div>
<div class="a" style="left:510px;top:687px;width:488px;height:8px;border-radius:4px;background:#595959"></div>
<div class="a" style="left:1006px;top:360px;width:8px;height:177px;border-radius:4px;background:#595959"></div>
<div class="a" style="left:1001px;top:166px;width:16px;height:24px;border:1px solid #242424;border-radius:6px;background:#2c2c2c"></div>
<svg style="left:1002px;top:171px" width="16" height="16" viewBox="0 0 16 16" ><circle cx="7.5" cy="7.5" r="7.4" fill="#dedede"/><path d="M12.4 12.4 L15.4 15.2" stroke="#dedede" stroke-width="2.6" stroke-linecap="round"/><text x="2.9" y="11" font-family="DejaVu Sans, sans-serif" font-weight="bold" font-size="9.6" textLength="9.4" lengthAdjust="spacingAndGlyphs" fill="#2a2a2a">1:1</text></svg>
<div class="a" style="left:1001px;top:678px;width:16px;height:24px;border:1px solid #242424;border-radius:6px;background:#2c2c2c"></div>
<svg style="left:1001px;top:683px" width="18" height="16" viewBox="0 0 18 16" ><circle cx="9" cy="4.8" r="3.3" fill="#2d2d2d" stroke="#dedede" stroke-width="1"/><circle cx="4.8" cy="12" r="3.3" fill="#cfcfcf" stroke="#dedede" stroke-width="1"/><circle cx="13.2" cy="12" r="3.3" fill="#888" stroke="#dedede" stroke-width="1"/></svg>
<div class="a" style="left:1px;top:716px;width:16px;height:16px;background:#fff"></div>
<svg style="left:1px;top:716px" width="16" height="16" viewBox="0 0 16 16" ><path d="M0 0 L16 16 M16 0 L0 16" stroke="#8b0000" stroke-width="1.4"/></svg>
<div class="a" style="left:18px;top:716px;width:16px;height:16px;background:#000000"></div>
<div class="a" style="left:35px;top:716px;width:16px;height:16px;background:#1a1a1a"></div>
<div class="a" style="left:52px;top:716px;width:16px;height:16px;background:#333333"></div>
<div class="a" style="left:69px;top:716px;width:16px;height:16px;background:#4d4d4d"></div>
<div class="a" style="left:86px;top:716px;width:16px;height:16px;background:#666666"></div>
<div class="a" style="left:103px;top:716px;width:16px;height:16px;background:#808080"></div>
<div class="a" style="left:120px;top:716px;width:16px;height:16px;background:#999999"></div>
<div class="a" style="left:137px;top:716px;width:16px;height:16px;background:#b3b3b3"></div>
<div class="a" style="left:154px;top:716px;width:16px;height:16px;background:#cccccc"></div>
<div class="a" style="left:171px;top:716px;width:16px;height:16px;background:#e6e6e6"></div>
<div class="a" style="left:188px;top:716px;width:16px;height:16px;background:#ececec"></div>
<div class="a" style="left:205px;top:716px;width:16px;height:16px;background:#f2f2f2"></div>
<div class="a" style="left:222px;top:716px;width:16px;height:16px;background:#f9f9f9"></div>
<div class="a" style="left:239px;top:716px;width:16px;height:16px;background:#ffffff"></div>
<div class="a" style="left:256px;top:716px;width:16px;height:16px;background:#800000"></div>
<div class="a" style="left:273px;top:716px;width:16px;height:16px;background:#ff0000"></div>
<div class="a" style="left:290px;top:716px;width:16px;height:16px;background:#808000"></div>
<div class="a" style="left:307px;top:716px;width:16px;height:16px;background:#ffff00"></div>
<div class="a" style="left:324px;top:716px;width:16px;height:16px;background:#008000"></div>
<div class="a" style="left:341px;top:716px;width:16px;height:16px;background:#00ff00"></div>
<div class="a" style="left:358px;top:716px;width:16px;height:16px;background:#008080"></div>
<div class="a" style="left:375px;top:716px;width:16px;height:16px;background:#00ffff"></div>
<div class="a" style="left:392px;top:716px;width:16px;height:16px;background:#000080"></div>
<div class="a" style="left:409px;top:716px;width:16px;height:16px;background:#0000ff"></div>
<div class="a" style="left:426px;top:716px;width:16px;height:16px;background:#800080"></div>
<div class="a" style="left:443px;top:716px;width:16px;height:16px;background:#ff00ff"></div>
<div class="a" style="left:460px;top:716px;width:16px;height:16px;background:#2b0000"></div>
<div class="a" style="left:477px;top:716px;width:16px;height:16px;background:#550000"></div>
<div class="a" style="left:494px;top:716px;width:16px;height:16px;background:#800000"></div>
<div class="a" style="left:511px;top:716px;width:16px;height:16px;background:#aa0000"></div>
<div class="a" style="left:528px;top:716px;width:16px;height:16px;background:#d40000"></div>
<div class="a" style="left:545px;top:716px;width:16px;height:16px;background:#ff0000"></div>
<div class="a" style="left:562px;top:716px;width:16px;height:16px;background:#ff2a2a"></div>
<div class="a" style="left:579px;top:716px;width:16px;height:16px;background:#ff5555"></div>
<div class="a" style="left:596px;top:716px;width:16px;height:16px;background:#ff8080"></div>
<div class="a" style="left:613px;top:716px;width:16px;height:16px;background:#ffaaaa"></div>
<div class="a" style="left:630px;top:716px;width:16px;height:16px;background:#ffd5d5"></div>
<div class="a" style="left:647px;top:716px;width:16px;height:16px;background:#280b0b"></div>
<div class="a" style="left:664px;top:716px;width:16px;height:16px;background:#501616"></div>
<div class="a" style="left:681px;top:716px;width:16px;height:16px;background:#782121"></div>
<div class="a" style="left:698px;top:716px;width:16px;height:16px;background:#a02c2c"></div>
<div class="a" style="left:715px;top:716px;width:16px;height:16px;background:#c83737"></div>
<div class="a" style="left:732px;top:716px;width:16px;height:16px;background:#d35f5f"></div>
<div class="a" style="left:749px;top:716px;width:16px;height:16px;background:#de8787"></div>
<div class="a" style="left:766px;top:716px;width:16px;height:16px;background:#e9afaf"></div>
<div class="a" style="left:783px;top:716px;width:16px;height:16px;background:#f4d7d7"></div>
<div class="a" style="left:800px;top:716px;width:16px;height:16px;background:#241c1c"></div>
<div class="a" style="left:817px;top:716px;width:16px;height:16px;background:#483737"></div>
<div class="a" style="left:834px;top:716px;width:16px;height:16px;background:#6c5353"></div>
<div class="a" style="left:851px;top:716px;width:16px;height:16px;background:#916f6f"></div>
<div class="a" style="left:868px;top:716px;width:16px;height:16px;background:#ac9393"></div>
<div class="a" style="left:885px;top:716px;width:16px;height:16px;background:#c8b7b7"></div>
<div class="a" style="left:902px;top:716px;width:16px;height:16px;background:#e3dbdb"></div>
<div class="a" style="left:919px;top:716px;width:16px;height:16px;background:#2b1100"></div>
<svg style="left:950px;top:715px" width="12" height="9" viewBox="0 0 12 9" ><path d="M1 8 L6 2.4 L11 8" fill="none" stroke="#f0f0f0" stroke-width="2"/></svg>
<svg style="left:981px;top:714px" width="13" height="9" viewBox="0 0 13 9" ><path d="M1 1.2 L6.2 7 L11.4 1.2" fill="none" stroke="#f0f0f0" stroke-width="2"/></svg>
<div class="a" style="left:1004px;top:706px;width:17px;height:25px;border:1px solid #2a2a2a;border-radius:5px;background:#343434"></div>
<div class="a" style="left:1006px;top:713px;width:14px;height:2px;background:#f2f2f2"></div>
<div class="a" style="left:1006px;top:718px;width:14px;height:2px;background:#f2f2f2"></div>
<div class="a" style="left:1006px;top:723px;width:14px;height:2px;background:#f2f2f2"></div>
<div class="t" style="left:0;width:47.5px;text-align:right;top:735px;color:#9a9a9a">Fill:</div>
<div class="t" style="left:0;width:47.5px;text-align:right;top:752px;color:#9a9a9a">Stroke:</div>
<div class="t" style="left:76px;top:735px;color:#9a9a9a">N/A</div>
<div class="t" style="left:76px;top:752px;color:#9a9a9a">N/A</div>
<div class="t" style="left:157px;top:743px;color:#666">O:</div>
<div class="a" style="left:173px;top:734px;width:70px;height:31px;border:1px solid #262626;border-radius:6px;background:#303030"></div><div class="t" style="left:180px;top:743px;color:#606060;letter-spacing:-0.15px">100</div><div class="a" style="left:210px;top:735px;width:1px;height:31px;background:#2a2a2a"></div><div class="a" style="left:227px;top:735px;width:1px;height:31px;background:#2a2a2a"></div><div class="a" style="left:212.0px;top:749.6px;width:14px;height:1.8px;background:#4c4c4c"></div><div class="a" style="left:229.0px;top:749.6px;width:14px;height:1.8px;background:#4c4c4c"></div><div class="a" style="left:235.1px;top:743.5px;width:1.8px;height:14px;background:#4c4c4c"></div>
<div class="a" style="left:261px;top:742px;width:3px;height:17px;background:#4a8cf0"></div>
<div class="t" style="left:270px;top:743px;color:#9a9a9a;letter-spacing:0px">Layer 1</div>
<svg style="left:339px;top:744px" width="15" height="14" viewBox="0 0 15 14" ><path d="M0.6 8.4 Q7.4 1.4 14.2 8.4 Q7.4 14.4 0.6 8.4 Z" fill="none" stroke="#f0f0f0" stroke-width="1.5"/><circle cx="7.4" cy="8.2" r="2.5" fill="#f0f0f0"/><path d="M3 2.8 L4.2 4.4 M7.4 1 V3 M11.8 2.8 L10.6 4.4" stroke="#f0f0f0" stroke-width="1.2" fill="none"/></svg>
<svg style="left:377px;top:744px" width="14" height="14" viewBox="0 0 14 14" ><rect x="0.2" y="6.6" width="9.6" height="7.4" rx="0.6" fill="#f0f0f0"/><path d="M7 6.6 V3.8 Q7 1 9.8 1 Q12.6 1 12.6 3.8 V5.2" fill="none" stroke="#f0f0f0" stroke-width="1.6"/></svg>
<div class="a" style="left:400px;top:737px;width:1px;height:31px;background:#2a2a2a"></div>
<div class="t" style="left:408px;top:735px;color:#9a9a9a;letter-spacing:0.04px">No objects selected. Click, Shift+click,</div>
<div class="t" style="left:408px;top:752px;color:#9a9a9a;letter-spacing:0.04px">Alt+scroll mouse on top of objects, or …</div>
<div class="a" style="left:676px;top:737px;width:1px;height:31px;background:#2a2a2a"></div>
<div class="t" style="left:686px;top:735px;color:#9a9a9a">X:</div>
<div class="t" style="left:686px;top:752px;color:#9a9a9a">Y:</div>
<div class="t" style="left:713px;top:735px;color:#9a9a9a;letter-spacing:-0.15px">619.77</div>
<div class="t" style="left:713px;top:752px;color:#9a9a9a;letter-spacing:-0.15px">302.63</div>
<div class="t" style="left:767.5px;top:743px;color:#8a8a8a">Z:</div>
<div class="a" style="left:780px;top:734px;width:98px;height:31px;border:1px solid #262626;border-radius:6px;background:#303030"></div><div class="t" style="left:793px;top:743px;color:#dcdcdc;letter-spacing:-0.15px">42%</div><div class="a" style="left:835px;top:735px;width:1px;height:31px;background:#2a2a2a"></div><div class="a" style="left:857px;top:735px;width:1px;height:31px;background:#2a2a2a"></div><div class="a" style="left:839.5px;top:749.6px;width:14px;height:1.8px;background:#c4c4c4"></div><div class="a" style="left:861.5px;top:749.6px;width:14px;height:1.8px;background:#c4c4c4"></div><div class="a" style="left:867.6px;top:743.5px;width:1.8px;height:14px;background:#c4c4c4"></div>
<div class="t" style="left:890.5px;top:743px;color:#8a8a8a">R:</div>
<div class="a" style="left:903px;top:734px;width:106px;height:31px;border:1px solid #262626;border-radius:6px;background:#303030"></div><div class="t" style="left:920px;top:743px;color:#dcdcdc;letter-spacing:-0.15px">0.00°</div><div class="a" style="left:966px;top:735px;width:1px;height:31px;background:#2a2a2a"></div><div class="a" style="left:988px;top:735px;width:1px;height:31px;background:#2a2a2a"></div><div class="a" style="left:970.5px;top:749.6px;width:14px;height:1.8px;background:#c4c4c4"></div><div class="a" style="left:992.5px;top:749.6px;width:14px;height:1.8px;background:#c4c4c4"></div><div class="a" style="left:998.6px;top:743.5px;width:1.8px;height:14px;background:#c4c4c4"></div>
<div class="a" style="left:367px;top:765px;width:291px;height:3px;background:#000"></div>
<svg width="0" height="0" style="left:0;top:0"><defs>
<linearGradient id="fb" x1="0" y1="0" x2="1" y2="0.4"><stop offset="0" stop-color="#4d95ea"/><stop offset="1" stop-color="#2b7ce0"/></linearGradient>
<linearGradient id="ff" x1="0" y1="0" x2="1" y2="1"><stop offset="0" stop-color="#8db9f0"/><stop offset="0.55" stop-color="#a9cff3"/><stop offset="1" stop-color="#c6e6f1"/></linearGradient>
<g id="fold">
<path d="M0 4 Q0 0 4 0 H16.5 Q19.5 0 21 2 L22.6 4 H48 Q52 4 52 8 V22 H0 Z" fill="url(#fb)"/>
<path d="M0 14.5 H20 Q23 14.5 24.6 12.2 Q26.2 10 29 10 H52 V49 Q52 52 49 52 H3 Q0 52 0 49 Z" fill="url(#ff)"/>
</g>
<g id="folds">
<path d="M0 1.6 Q0 0.2 1.4 0.2 H5.4 Q6.4 0.2 6.9 1 L7.6 2 H14.6 Q16 2 16 3.4 V8 H0 Z" fill="url(#fb)"/>
<path d="M0 5.2 H6.4 Q7.4 5.2 7.9 4.5 Q8.4 3.8 9.4 3.8 H16 V14.8 Q16 16 14.8 16 H1.2 Q0 16 0 14.8 Z" fill="url(#ff)"/>
</g>
<g id="folds-home"><use href="#folds"/><path d="M4.6 10.7 L8 7.5 L11.4 10.7 M5.7 10 V13.5 H10.3 V10 M7.3 13.5 V11.5 H8.7 V13.5" fill="none" stroke="#3584e4" stroke-width="1" stroke-linejoin="round" stroke-linecap="round"/></g>
<g id="folds-down"><use href="#folds"/><path d="M8 7.2 V13.2 M5.6 10.8 L8 13.2 L10.4 10.8" fill="none" stroke="#3584e4" stroke-width="1.1" stroke-linejoin="round" stroke-linecap="round"/></g>
<g id="em-home" fill="none" stroke="#3584e4" stroke-width="2.2" stroke-linejoin="round" stroke-linecap="round"><path d="M16 31 L26 22 L36 31 M19 29.5 V41 H33 V29.5 M23.6 41 V34.5 H28.4 V41"/></g>
</defs></svg>
<div class="a" id="th">
<div class="a" style="left:0;top:0;width:455px;height:29px;border-radius:5px 5px 0 0;background:linear-gradient(#252525,#191919 75%);box-shadow:inset 0 1px 0 #050505,inset 1px 0 0 #050505,inset -1px 0 0 #050505"></div>
<svg style="left:5px;top:4px" width="22" height="22" viewBox="0 0 52 52"><use href="#fold"/><use href="#em-home"/></svg>
<div class="tt" style="left:0;width:386px;text-align:center;top:8px;font-weight:bold;font-size:12px;color:#fff;letter-spacing:0.1px">master - Thunar</div>
<svg style="left:362px;top:7px" width="88" height="18" viewBox="0 0 88 18" fill="none" stroke="#fff" stroke-width="1.8"><path d="M4.4 11.8 L8.5 7.2 L12.6 11.8"/><path d="M27 11.6 L35.8 11.6" stroke-width="2"/><rect x="50.7" y="4.9" width="7.4" height="6.9" stroke-width="1.9"/><path d="M73.4 4.6 L81.6 12.2 M81.6 4.6 L73.4 12.2"/></svg>
<div class="tt" style="left:12.600000000000023px;top:34px;font-size:13.33px;letter-spacing:-0.1px">File</div>
<div class="tt" style="left:52px;top:34px;font-size:13.33px;letter-spacing:-0.1px">Edit</div>
<div class="tt" style="left:93px;top:34px;font-size:13.33px;letter-spacing:-0.1px">View</div>
<div class="tt" style="left:140.60000000000002px;top:34px;font-size:13.33px;letter-spacing:-0.1px">Go</div>
<div class="tt" style="left:174.60000000000002px;top:34px;font-size:13.33px;letter-spacing:-0.1px">Bookmarks</div>
<div class="tt" style="left:264.6px;top:34px;font-size:13.33px;letter-spacing:-0.1px">Help</div>
<div class="a" style="left:9.5px;top:58px;width:31.0px;height:27.6px;border:1px solid #111;border-radius:3.5px;background:#212121"></div>
<div class="a" style="left:44.5px;top:58px;width:31.0px;height:27.6px;border:1px solid #111;border-radius:3.5px;background:#212121"></div>
<div class="a" style="left:79.5px;top:58px;width:31.0px;height:27.6px;border:1px solid #111;border-radius:3.5px;background:#212121"></div>
<div class="a" style="left:114.5px;top:58px;width:31.0px;height:27.6px;border:1px solid #111;border-radius:3.5px;background:#212121"></div>
<div class="a" style="left:412.5px;top:58px;width:31.0px;height:27.6px;border:1px solid #111;border-radius:3.5px;background:#212121"></div>
<div class="a" style="left:149px;top:58px;width:259.5px;height:27.6px;border:1px solid #111;border-radius:3.5px;background:#212121"></div>
<svg style="left:19px;top:62px" width="14" height="23" viewBox="0 0 14 23" ><path d="M11.6 1.6 L2.6 11.2 L11.6 20.8" fill="none" stroke="#d6d3cd" stroke-width="2.5" stroke-linecap="round" stroke-linejoin="round"/></svg>
<svg style="left:54px;top:62px" width="14" height="23" viewBox="0 0 14 23" ><path d="M2 1.6 L11 11.2 L2 20.8" fill="none" stroke="#d6d3cd" stroke-width="2.5" stroke-linecap="round" stroke-linejoin="round"/></svg>
<svg style="left:85px;top:66px" width="23" height="14" viewBox="0 0 23 14" ><path d="M1.6 11.6 L11.3 2.4 L21 11.6" fill="none" stroke="#f4f2ee" stroke-width="2.3" stroke-linecap="round" stroke-linejoin="round"/></svg>
<svg style="left:118px;top:61px" width="26" height="23" viewBox="0 0 26 23" ><path d="M1.8 11.6 L13 2 L24.2 11.6 M5.2 9.4 V20.6 H20.8 V9.4 M10.2 20.6 V13.6 H15.8 V20.6" fill="none" stroke="#f4f2ee" stroke-width="2.9" stroke-linecap="round" stroke-linejoin="round"/></svg>
<svg style="left:157.79999999999995px;top:65px" width="16.4" height="16" viewBox="0 0 16 16"><use href="#folds-home"/></svg>
<div class="tt" style="left:179.60000000000002px;top:65px;font-size:13.33px;letter-spacing:-0.15px">/home/master/</div>
<svg style="left:416px;top:61px" width="26" height="25" viewBox="0 0 26 25" ><circle cx="10.5" cy="10" r="7.5" fill="none" stroke="#f4f2ee" stroke-width="2.6"/><path d="M16.4 15.8 L23.4 22.4" stroke="#f4f2ee" stroke-width="3.1" stroke-linecap="round"/></svg>
<div class="a" style="left:5px;top:92px;width:170px;height:325px;background:#212121"></div>
<div class="a" style="left:175px;top:92px;width:275px;height:298px;background:#212121;border-left:1px solid #0e0e0e;border-top:1px solid #0e0e0e;box-sizing:border-box"></div>
<div class="a" style="left:175px;top:390px;width:275px;height:1px;background:#0e0e0e"></div>
<div class="a" style="left:175px;top:391px;width:1px;height:26px;background:#0e0e0e"></div>
<div class="a" style="left:5px;top:145px;width:170px;height:26px;background:#788378"></div>
<div class="tt" style="left:13px;top:98px;font-weight:bold;font-size:13.33px;color:#f2f2f2">Places</div>
<div class="tt" style="left:13px;top:255px;font-weight:bold;font-size:13.33px;color:#f2f2f2">Devices</div>
<div class="tt" style="left:13px;top:308px;font-weight:bold;font-size:13.33px;color:#f2f2f2">Network</div>
<div class="tt" style="left:49px;top:124px;font-size:13.33px;letter-spacing:-0.15px">Computer</div>
<div class="tt" style="left:49px;top:150px;font-size:13.33px;letter-spacing:-0.15px">master</div>
<div class="tt" style="left:49px;top:176px;font-size:13.33px;letter-spacing:-0.15px">Desktop</div>
<div class="tt" style="left:49px;top:202px;font-size:13.33px;letter-spacing:-0.15px">Recent</div>
<div class="tt" style="left:49px;top:228px;font-size:13.33px;letter-spacing:-0.15px">Trash</div>
<div class="tt" style="left:49px;top:281px;font-size:13.33px;letter-spacing:-0.15px">File System</div>
<div class="tt" style="left:49px;top:334px;font-size:13.33px;letter-spacing:-0.17px">Browse Network</div>
<svg style="left:22px;top:121px" width="23" height="22" viewBox="0 0 23 22" ><rect x="0.8" y="0.8" width="21" height="17" rx="1" fill="#1c71d8" stroke="#2a2f3a" stroke-width="0.8"/><rect x="6.4" y="18.4" width="9.6" height="3" fill="#77767b"/><rect x="8" y="17.8" width="6.4" height="1.4" fill="#5e5c64"/></svg>
<svg style="left:22px;top:147px" width="21" height="21" viewBox="0 0 21 21" ><path d="M1.6 11 L10.5 2.6 L19.4 11" fill="none" stroke="#fff" stroke-width="2.6" stroke-linejoin="round" stroke-linecap="round"/><path d="M4 10.4 V18.6 H8.6 V14 H12.4 V18.6 H17 V10.4" fill="none" stroke="#fff" stroke-width="2.2"/><path d="M3 20.6 H18" stroke="rgba(40,50,40,0.35)" stroke-width="1"/></svg>
<svg style="left:22px;top:173px" width="22" height="22" viewBox="0 0 52 52"><use href="#fold"/><g fill="none" stroke="#3584e4" stroke-width="2.4"><path d="M22.4 27 H29.6 V37.4 H22.4 Z"/><path d="M15 27 V23.4 H18.4 M34 23.4 H37.4 V27 M37.4 37 V40.6 H34 M18.4 40.6 H15 V37" stroke-width="2.2"/></g></svg>
<svg style="left:22px;top:198px" width="23" height="23" viewBox="0 0 23 23" ><defs><radialGradient id="ck" cx="0.5" cy="0.4" r="0.6"><stop offset="0" stop-color="#ffffff"/><stop offset="1" stop-color="#d8d8d8"/></radialGradient></defs><circle cx="11.6" cy="11.6" r="9.6" fill="url(#ck)" stroke="#9a9a96" stroke-width="1.6"/><path d="M11.6 5 V11.6 H15.6" fill="none" stroke="#2e2e2e" stroke-width="1.1"/><circle cx="11.6" cy="11.6" r="1.1" fill="#2e2e2e"/><path d="M8.6 3.2 Q4.6 3.6 4.4 7.6 L6.6 7.6 L3.2 11.2 L0 7.6 L2 7.6 Q2.2 1.8 8.6 1.2 Z" fill="#f5c211" stroke="#b5870a" stroke-width="0.6"/></svg>
<svg style="left:23px;top:225px" width="20" height="22" viewBox="0 0 20 22" ><rect x="0.4" y="0.6" width="19" height="8" rx="1.2" fill="#c0bfbc" stroke="#f0f0f0" stroke-width="0.8"/><rect x="2" y="2.2" width="15.8" height="3.2" fill="#8a8a88"/><path d="M4 5 L9 2.6 L12 4 L15.6 3" stroke="#d6d6d6" stroke-width="0.8" fill="none"/><path d="M0.8 9.4 H19 V20 Q19 21.6 17.4 21.6 H2.4 Q0.8 21.6 0.8 20 Z" fill="#2ec27e"/><g fill="none" stroke="#fff" stroke-width="1.5"><path d="M7.4 13.6 L9.9 11.6 L12.4 13.6"/><path d="M13.4 15 L13.6 18 L10.6 18.4"/><path d="M9 18.4 L6.2 18 L6.4 15"/></g></svg>
<svg style="left:23px;top:277px" width="20" height="23" viewBox="0 0 20 23" ><defs><linearGradient id="hd" x1="0" y1="0" x2="0" y2="1"><stop offset="0" stop-color="#f2f2f2"/><stop offset="1" stop-color="#dcdcdc"/></linearGradient></defs><rect x="0.6" y="0.6" width="18" height="21" rx="2" fill="url(#hd)" stroke="#9a9996" stroke-width="0.9"/><circle cx="9.2" cy="10.4" r="7" fill="#e4e4e2" stroke="#cfcfcd" stroke-width="0.8"/><circle cx="9.2" cy="10.4" r="1.5" fill="#f8f8f8"/><path d="M1.4 19.2 H17.8" stroke="#b8b8b6" stroke-width="1"/></svg>
<svg style="left:22.399999999999977px;top:331.20000000000005px" width="22" height="22" viewBox="0 0 22 22" ><rect x="0.6" y="0.6" width="14.2" height="12" rx="0.8" fill="#1a5fb4" stroke="#1c3557" stroke-width="0.7"/><rect x="3.4" y="12.8" width="3" height="1.6" fill="#4a4a50"/><rect x="6.6" y="6" width="14.6" height="12.2" rx="0.8" fill="#5a9cea" stroke="#24364f" stroke-width="0.8"/><rect x="10.4" y="18.8" width="7" height="2.6" fill="#5e5c64"/></svg>
<svg style="left:215px;top:107px" width="52" height="52" viewBox="0 0 52 52"><use href="#fold"/><g fill="none" stroke="#3584e4" stroke-width="1.9" stroke-linejoin="round" stroke-linecap="round"><path d="M21.2 25.2 H28.4 L31.8 28.6 V38.8 H21.2 Z"/><path d="M15 26 V22.8 H18.2 M34.8 22.8 H38 V26 M38 38 V41.2 H34.8 M18.2 41.2 H15 V38"/></g></svg>
<div class="tt" style="left:181.29999999999995px;width:120px;text-align:center;top:169px;font-size:13.33px;letter-spacing:-0.2px;color:#e8e8e8">Desktop</div>
<svg style="left:339px;top:107px" width="52" height="52" viewBox="0 0 52 52"><use href="#fold"/><g fill="none" stroke="#3584e4" stroke-width="2.0" stroke-linejoin="round" stroke-linecap="round"><path d="M21 23.4 Q19 23.4 19 25.4 V38.6 Q19 40.6 21 40.6 H31.4 Q33.4 40.6 33.4 38.6 V29 L27.8 23.4 Z"/></g></svg>
<div class="tt" style="left:305.1px;width:120px;text-align:center;top:169px;font-size:13.33px;letter-spacing:-0.25px;color:#e8e8e8">Documents</div>
<svg style="left:215px;top:202px" width="52" height="52" viewBox="0 0 52 52"><use href="#fold"/><g fill="none" stroke="#3584e4" stroke-width="2.0" stroke-linejoin="round" stroke-linecap="round"><path d="M25.8 22.6 V41.4 M18.4 34 L25.8 41.4 L33.2 34"/></g></svg>
<div class="tt" style="left:181.10000000000002px;width:120px;text-align:center;top:264px;font-size:13.33px;letter-spacing:-0.25px;color:#e8e8e8">Downloads</div>
<svg style="left:339px;top:202px" width="52" height="52" viewBox="0 0 52 52"><use href="#fold"/><g fill="none" stroke="#3584e4" stroke-width="2.0" stroke-linejoin="round" stroke-linecap="round"><circle cx="18.2" cy="37.2" r="3.4"/><circle cx="31.6" cy="37.2" r="3.4"/><path d="M21.6 37.2 V23 H35 V37.2"/></g></svg>
<div class="tt" style="left:305.20000000000005px;width:120px;text-align:center;top:264px;font-size:13.33px;letter-spacing:-0.2px;color:#e8e8e8">Music</div>
<svg style="left:215px;top:297px" width="52" height="52" viewBox="0 0 52 52"><use href="#fold"/><g fill="none" stroke="#3584e4" stroke-width="1.8" stroke-linejoin="round" stroke-linecap="round"><path d="M16.6 25.8 H20.6 L22.4 21.6 H30.4 L32.2 25.8 H36.2 Q38 25.8 38 27.6 V39.2 Q38 41 36.2 41 H16.6 Q14.8 41 14.8 39.2 V27.6 Q14.8 25.8 16.6 25.8 Z"/><circle cx="26.2" cy="32.6" r="4.2"/></g></svg>
<div class="tt" style="left:180.79999999999995px;width:120px;text-align:center;top:359px;font-size:13.33px;letter-spacing:-0.2px;color:#e8e8e8">Pictures</div>
<svg style="left:339px;top:297px" width="52" height="52" viewBox="0 0 52 52"><use href="#fold"/><g fill="none" stroke="#3584e4" stroke-width="1.8" stroke-linejoin="round" stroke-linecap="round"><circle cx="32.4" cy="24" r="3.6"/><circle cx="17.8" cy="31.8" r="3.6"/><circle cx="32.4" cy="39.6" r="3.6"/><path d="M21 30.2 L29.2 25.8 M21 33.4 L29.2 37.8"/></g></svg>
<div class="tt" style="left:304.6px;width:120px;text-align:center;top:359px;font-size:13.33px;letter-spacing:-0.2px;color:#e8e8e8">Public</div>
<div class="a" style="left:177px;top:389px;width:272px;height:1px;background:repeating-linear-gradient(90deg,#525252 0,#525252 5px,transparent 5px,transparent 10px)"></div>
<div class="tt" style="left:190px;top:397px;font-size:13.33px;color:#e8e8e8;letter-spacing:-0.24px;white-space:pre">8 folders  |  2 files: 383.2 KiB (392,3…</div>
</div>
</body></html>
